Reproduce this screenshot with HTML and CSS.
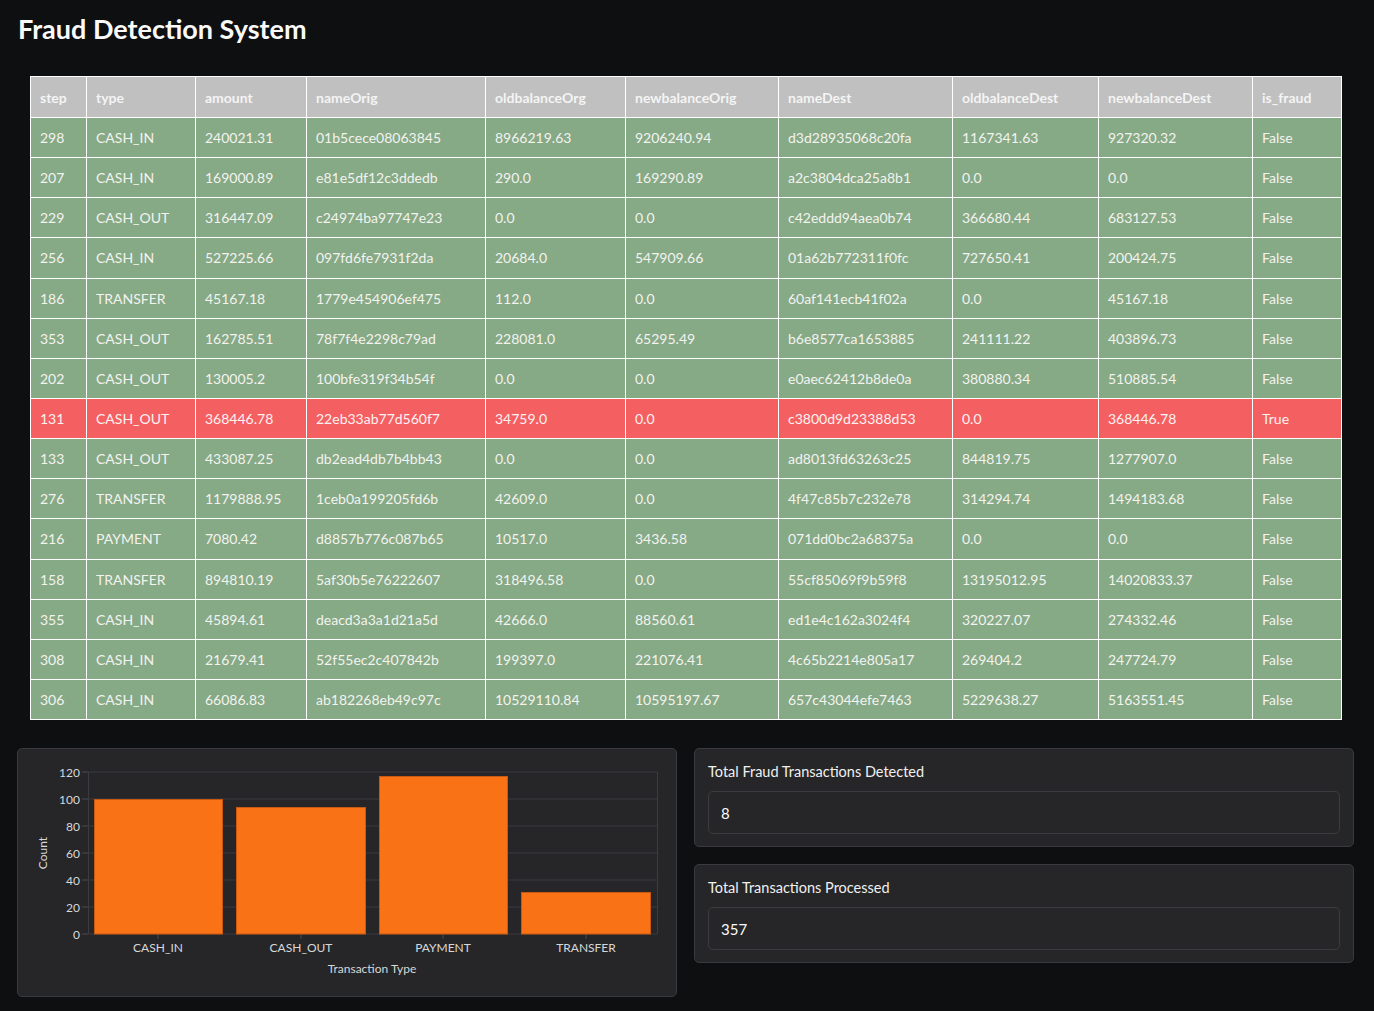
FILE: index.html
```html
<!DOCTYPE html>
<html lang="en">
<head>
<meta charset="utf-8">
<title>Fraud Detection System</title>
<link rel="stylesheet" href="styles.css">
</head>
<body>
<main class="page">
  <h1 class="title">Fraud Detection System</h1>
  <table class="data">
    <colgroup>
      <col style="width:56px"><col style="width:109px"><col style="width:111px"><col style="width:179px"><col style="width:140px"><col style="width:153px"><col style="width:174px"><col style="width:146px"><col style="width:154px"><col style="width:89px">
    </colgroup>
    <thead>
      <tr><th>step</th><th>type</th><th>amount</th><th>nameOrig</th><th>oldbalanceOrg</th><th>newbalanceOrig</th><th>nameDest</th><th>oldbalanceDest</th><th>newbalanceDest</th><th>is_fraud</th></tr>
    </thead>
    <tbody>
      <tr><td>298</td><td>CASH_IN</td><td>240021.31</td><td>01b5cece08063845</td><td>8966219.63</td><td>9206240.94</td><td>d3d28935068c20fa</td><td>1167341.63</td><td>927320.32</td><td>False</td></tr>
      <tr><td>207</td><td>CASH_IN</td><td>169000.89</td><td>e81e5df12c3ddedb</td><td>290.0</td><td>169290.89</td><td>a2c3804dca25a8b1</td><td>0.0</td><td>0.0</td><td>False</td></tr>
      <tr><td>229</td><td>CASH_OUT</td><td>316447.09</td><td>c24974ba97747e23</td><td>0.0</td><td>0.0</td><td>c42eddd94aea0b74</td><td>366680.44</td><td>683127.53</td><td>False</td></tr>
      <tr><td>256</td><td>CASH_IN</td><td>527225.66</td><td>097fd6fe7931f2da</td><td>20684.0</td><td>547909.66</td><td>01a62b772311f0fc</td><td>727650.41</td><td>200424.75</td><td>False</td></tr>
      <tr><td>186</td><td>TRANSFER</td><td>45167.18</td><td>1779e454906ef475</td><td>112.0</td><td>0.0</td><td>60af141ecb41f02a</td><td>0.0</td><td>45167.18</td><td>False</td></tr>
      <tr><td>353</td><td>CASH_OUT</td><td>162785.51</td><td>78f7f4e2298c79ad</td><td>228081.0</td><td>65295.49</td><td>b6e8577ca1653885</td><td>241111.22</td><td>403896.73</td><td>False</td></tr>
      <tr><td>202</td><td>CASH_OUT</td><td>130005.2</td><td>100bfe319f34b54f</td><td>0.0</td><td>0.0</td><td>e0aec62412b8de0a</td><td>380880.34</td><td>510885.54</td><td>False</td></tr>
      <tr class="fraud"><td>131</td><td>CASH_OUT</td><td>368446.78</td><td>22eb33ab77d560f7</td><td>34759.0</td><td>0.0</td><td>c3800d9d23388d53</td><td>0.0</td><td>368446.78</td><td>True</td></tr>
      <tr><td>133</td><td>CASH_OUT</td><td>433087.25</td><td>db2ead4db7b4bb43</td><td>0.0</td><td>0.0</td><td>ad8013fd63263c25</td><td>844819.75</td><td>1277907.0</td><td>False</td></tr>
      <tr><td>276</td><td>TRANSFER</td><td>1179888.95</td><td>1ceb0a199205fd6b</td><td>42609.0</td><td>0.0</td><td>4f47c85b7c232e78</td><td>314294.74</td><td>1494183.68</td><td>False</td></tr>
      <tr><td>216</td><td>PAYMENT</td><td>7080.42</td><td>d8857b776c087b65</td><td>10517.0</td><td>3436.58</td><td>071dd0bc2a68375a</td><td>0.0</td><td>0.0</td><td>False</td></tr>
      <tr><td>158</td><td>TRANSFER</td><td>894810.19</td><td>5af30b5e76222607</td><td>318496.58</td><td>0.0</td><td>55cf85069f9b59f8</td><td>13195012.95</td><td>14020833.37</td><td>False</td></tr>
      <tr><td>355</td><td>CASH_IN</td><td>45894.61</td><td>deacd3a3a1d21a5d</td><td>42666.0</td><td>88560.61</td><td>ed1e4c162a3024f4</td><td>320227.07</td><td>274332.46</td><td>False</td></tr>
      <tr><td>308</td><td>CASH_IN</td><td>21679.41</td><td>52f55ec2c407842b</td><td>199397.0</td><td>221076.41</td><td>4c65b2214e805a17</td><td>269404.2</td><td>247724.79</td><td>False</td></tr>
      <tr><td>306</td><td>CASH_IN</td><td>66086.83</td><td>ab182268eb49c97c</td><td>10529110.84</td><td>10595197.67</td><td>657c43044efe7463</td><td>5229638.27</td><td>5163551.45</td><td>False</td></tr>
    </tbody>
  </table>

  <section class="bottom">
    <div class="card chart-card">
      <svg class="chart" width="658" height="247" viewBox="0 0 658 247">
        <g class="grid">
          <line x1="70" y1="23" x2="639" y2="23"/>
          <line x1="70" y1="50" x2="639" y2="50"/>
          <line x1="70" y1="77" x2="639" y2="77"/>
          <line x1="70" y1="104" x2="639" y2="104"/>
          <line x1="70" y1="131" x2="639" y2="131"/>
          <line x1="70" y1="158" x2="639" y2="158"/>
          <line x1="70" y1="185" x2="639" y2="185"/>
          <line x1="70.5" y1="23" x2="70.5" y2="185"/>
          <line x1="639.5" y1="23" x2="639.5" y2="185"/>
        </g>
        <g class="ticks">
          <line x1="64" y1="23" x2="70" y2="23"/>
          <line x1="64" y1="50" x2="70" y2="50"/>
          <line x1="64" y1="77" x2="70" y2="77"/>
          <line x1="64" y1="104" x2="70" y2="104"/>
          <line x1="64" y1="131" x2="70" y2="131"/>
          <line x1="64" y1="158" x2="70" y2="158"/>
          <line x1="64" y1="185" x2="70" y2="185"/>
          <line x1="140" y1="185" x2="140" y2="190"/>
          <line x1="283" y1="185" x2="283" y2="190"/>
          <line x1="425" y1="185" x2="425" y2="190"/>
          <line x1="568" y1="185" x2="568" y2="190"/>
        </g>
        <g class="bars">
          <rect x="76.5" y="50.5" width="128" height="134.5"/>
          <rect x="218.5" y="58.5" width="129" height="126.5"/>
          <rect x="361.5" y="27.5" width="128" height="157.5"/>
          <rect x="503.5" y="143.5" width="129" height="41.5"/>
        </g>
        <g class="ylabels">
          <text x="62" y="27.5">120</text>
          <text x="62" y="54.5">100</text>
          <text x="62" y="81.5">80</text>
          <text x="62" y="108.5">60</text>
          <text x="62" y="135.5">40</text>
          <text x="62" y="162.5">20</text>
          <text x="62" y="189.5">0</text>
        </g>
        <g class="xlabels">
          <text x="140" y="203">CASH_IN</text>
          <text x="283" y="203">CASH_OUT</text>
          <text x="425" y="203">PAYMENT</text>
          <text x="568" y="203">TRANSFER</text>
        </g>
        <text class="axis-title" x="354" y="224">Transaction Type</text>
        <text class="axis-title" transform="translate(29 104) rotate(-90)">Count</text>
      </svg>
    </div>
    <div class="metrics">
      <div class="card metric">
        <div class="metric-label">Total Fraud Transactions Detected</div>
        <div class="metric-value">8</div>
      </div>
      <div class="card metric">
        <div class="metric-label">Total Transactions Processed</div>
        <div class="metric-value">357</div>
      </div>
    </div>
  </section>
</main>
</body>
</html>
```

FILE: styles.css
```css
* { box-sizing: border-box; }
html, body {
  margin: 0;
  background: #0e0f11;
}
body {
  font-family: "Lato", "Noto Sans", sans-serif;
  color: #f0f0f0;
}
.page {
  padding: 11px 20px 0 17px;
}
.title {
  margin: 0 0 0 1px;
  font-size: 27px;
  font-weight: 700;
  line-height: 36px;
  color: #fafafa;
}
.data {
  margin: 29px 0 0 13px;
  width: 1311px;
  table-layout: fixed;
  border-collapse: collapse;
  font-size: 14px;
}
.data th, .data td {
  border: 1px solid #ffffff;
  height: 40.15px;
  padding: 0 9px;
  text-align: left;
  white-space: nowrap;
  overflow: hidden;
}
.data th {
  background: #c0c0c0;
  color: #f4f4f4;
  font-weight: 700;
  height: 41px;
}
.data td {
  background: #86a986;
  color: #f3f3ef;
}
.data tr.fraud td {
  background: #f46062;
  color: #fdf2f2;
}
.bottom {
  display: flex;
  gap: 17px;
  margin-top: 28px;
}
.card {
  background: #262629;
  border: 1px solid #3a3a3e;
  border-radius: 5px;
}
.chart-card {
  width: 660px;
  height: 249px;
}
.chart { display: block; }
.grid line { stroke: #3b3b40; stroke-width: 1; }
.ticks line { stroke: #4a4a50; stroke-width: 1; }
.bars rect { fill: #f97316; stroke: #c65a10; stroke-width: 1; }
.ylabels text {
  fill: #d8d8d8;
  font-size: 12px;
  text-anchor: end;
  font-family: "Lato", sans-serif;
}
.xlabels text, .axis-title {
  fill: #d8d8d8;
  font-size: 12px;
  text-anchor: middle;
  font-family: "Lato", sans-serif;
}
.metrics {
  width: 660px;
  display: flex;
  flex-direction: column;
  gap: 17px;
}
.metric {
  height: 99px;
  padding: 13px 13px 0 13px;
}
.metric-label {
  font-size: 14.5px;
  line-height: 20px;
  color: #f0f0f0;
}
.metric-value {
  margin-top: 9px;
  height: 43px;
  border: 1px solid #3c3c40;
  border-radius: 5px;
  padding: 0 12px;
  display: flex;
  align-items: center;
  font-size: 15px;
  color: #fafafa;
}
```
